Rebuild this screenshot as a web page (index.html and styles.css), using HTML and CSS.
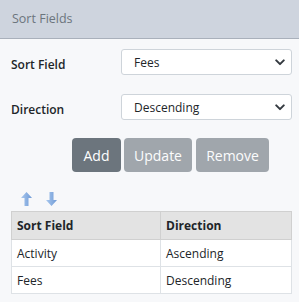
FILE: index.html
```html
<!DOCTYPE html>
<html>
<head>
<meta charset="utf-8">
<link rel="stylesheet" href="styles.css">
</head>
<body>
<div class="panel">
  <div class="panel-head">Sort Fields</div>
  <div class="panel-body">
    <div class="form-grid">
      <label class="lbl">Sort Field</label>
      <div class="select"><span>Fees</span><svg class="chev" viewBox="0 0 12 8" width="10" height="7"><path d="M1.5 1.5 L6 6 L10.5 1.5" fill="none" stroke="#343a40" stroke-width="2.4" stroke-linecap="round" stroke-linejoin="round"/></svg></div>
      <label class="lbl">Direction</label>
      <div class="select"><span>Descending</span><svg class="chev" viewBox="0 0 12 8" width="10" height="7"><path d="M1.5 1.5 L6 6 L10.5 1.5" fill="none" stroke="#343a40" stroke-width="2.4" stroke-linecap="round" stroke-linejoin="round"/></svg></div>
    </div>
    <div class="btns">
      <button class="btn w-add">Add</button>
      <button class="btn w-upd disabled">Update</button>
      <button class="btn w-rem disabled">Remove</button>
    </div>
    <div class="arrows">
      <svg width="11" height="14" viewBox="0 0 11 14"><defs><linearGradient id="g1" x1="0" y1="0" x2="1" y2="0"><stop offset="0" stop-color="#a9c8ee"/><stop offset="1" stop-color="#6f9ad6"/></linearGradient></defs><path d="M5.5 0 L11 6 L7.5 6 L7.5 14 L3.5 14 L3.5 6 L0 6 Z" fill="url(#g1)"/></svg>
      <svg width="11" height="14" viewBox="0 0 11 14"><defs><linearGradient id="g2" x1="0" y1="0" x2="1" y2="0"><stop offset="0" stop-color="#a9c8ee"/><stop offset="1" stop-color="#6f9ad6"/></linearGradient></defs><path d="M5.5 14 L11 8 L7.5 8 L7.5 0 L3.5 0 L3.5 8 L0 8 Z" fill="url(#g2)"/></svg>
    </div>
    <table class="tbl">
      <thead><tr><th class="c1">Sort Field</th><th>Direction</th></tr></thead>
      <tbody>
        <tr><td>Activity</td><td>Ascending</td></tr>
        <tr><td>Fees</td><td>Descending</td></tr>
      </tbody>
    </table>
  </div>
</div>
</body>
</html>
```
FILE: styles.css
```css
html, body {
  margin: 0;
  padding: 0;
  background: #f7f8fa;
  font-family: "Open Sans", "Noto Sans", sans-serif;
  color: #212529;
}
.panel {
  width: 299px;
  height: 302px;
  background: #f7f8fa;
}
.panel-head {
  box-sizing: border-box;
  height: 39px;
  border-bottom: 1px solid #a9b0bb;
  background: #ced4de;
  color: #6c757d;
  font-size: 12.5px;
  line-height: 38px;
  padding-left: 12px;
}
.panel-body {
  padding: 10px 7px 0 11px;
}
.form-grid {
  display: grid;
  grid-template-columns: 110px 1fr;
  row-gap: 19px;
  align-items: center;
}
.lbl {
  font-size: 12px;
  font-weight: 600;
  color: #212529;
  padding-top: 4px;
}
.select {
  height: 26px;
  box-sizing: border-box;
  background: #fff;
  border: 1px solid #ced4da;
  border-radius: 3px;
  display: flex;
  align-items: center;
  justify-content: space-between;
  padding: 0 6px 0 12px;
  font-size: 12px;
  color: #212529;
}
.chev { display: block; }
.btns {
  display: flex;
  gap: 3px;
  margin-top: 18px;
  padding-left: 61px;
}
.btn {
  height: 34px;
  border: none;
  border-radius: 4px;
  background: #6c757d;
  color: #fff;
  font-family: "Open Sans", "Noto Sans", sans-serif;
  font-size: 14px;
  padding: 0;
  margin: 0;
  text-align: center;
}
.w-add { width: 49px; }
.w-upd { width: 68px; }
.w-rem { width: 73px; margin-left: 1px; }
.btn.disabled {
  opacity: 0.62;
}
.arrows {
  display: flex;
  gap: 14px;
  padding-left: 10px;
  margin-top: 20px;
  height: 14px;
}
.tbl {
  margin-top: 5px;
  width: 281px;
  border-collapse: collapse;
  background: #fff;
  font-size: 12px;
  table-layout: fixed;
}
.tbl th, .tbl td {
  border: 1px solid #dee2e6;
  text-align: left;
  padding: 0 5px;
}
.tbl th {
  background: #e3e3e3;
  font-weight: 700;
  height: 27px;
  border-color: #d0d0d0;
}
.tbl th.c1 { width: 149px; box-sizing: border-box; }
.tbl td {
  height: 26px;
}
```
